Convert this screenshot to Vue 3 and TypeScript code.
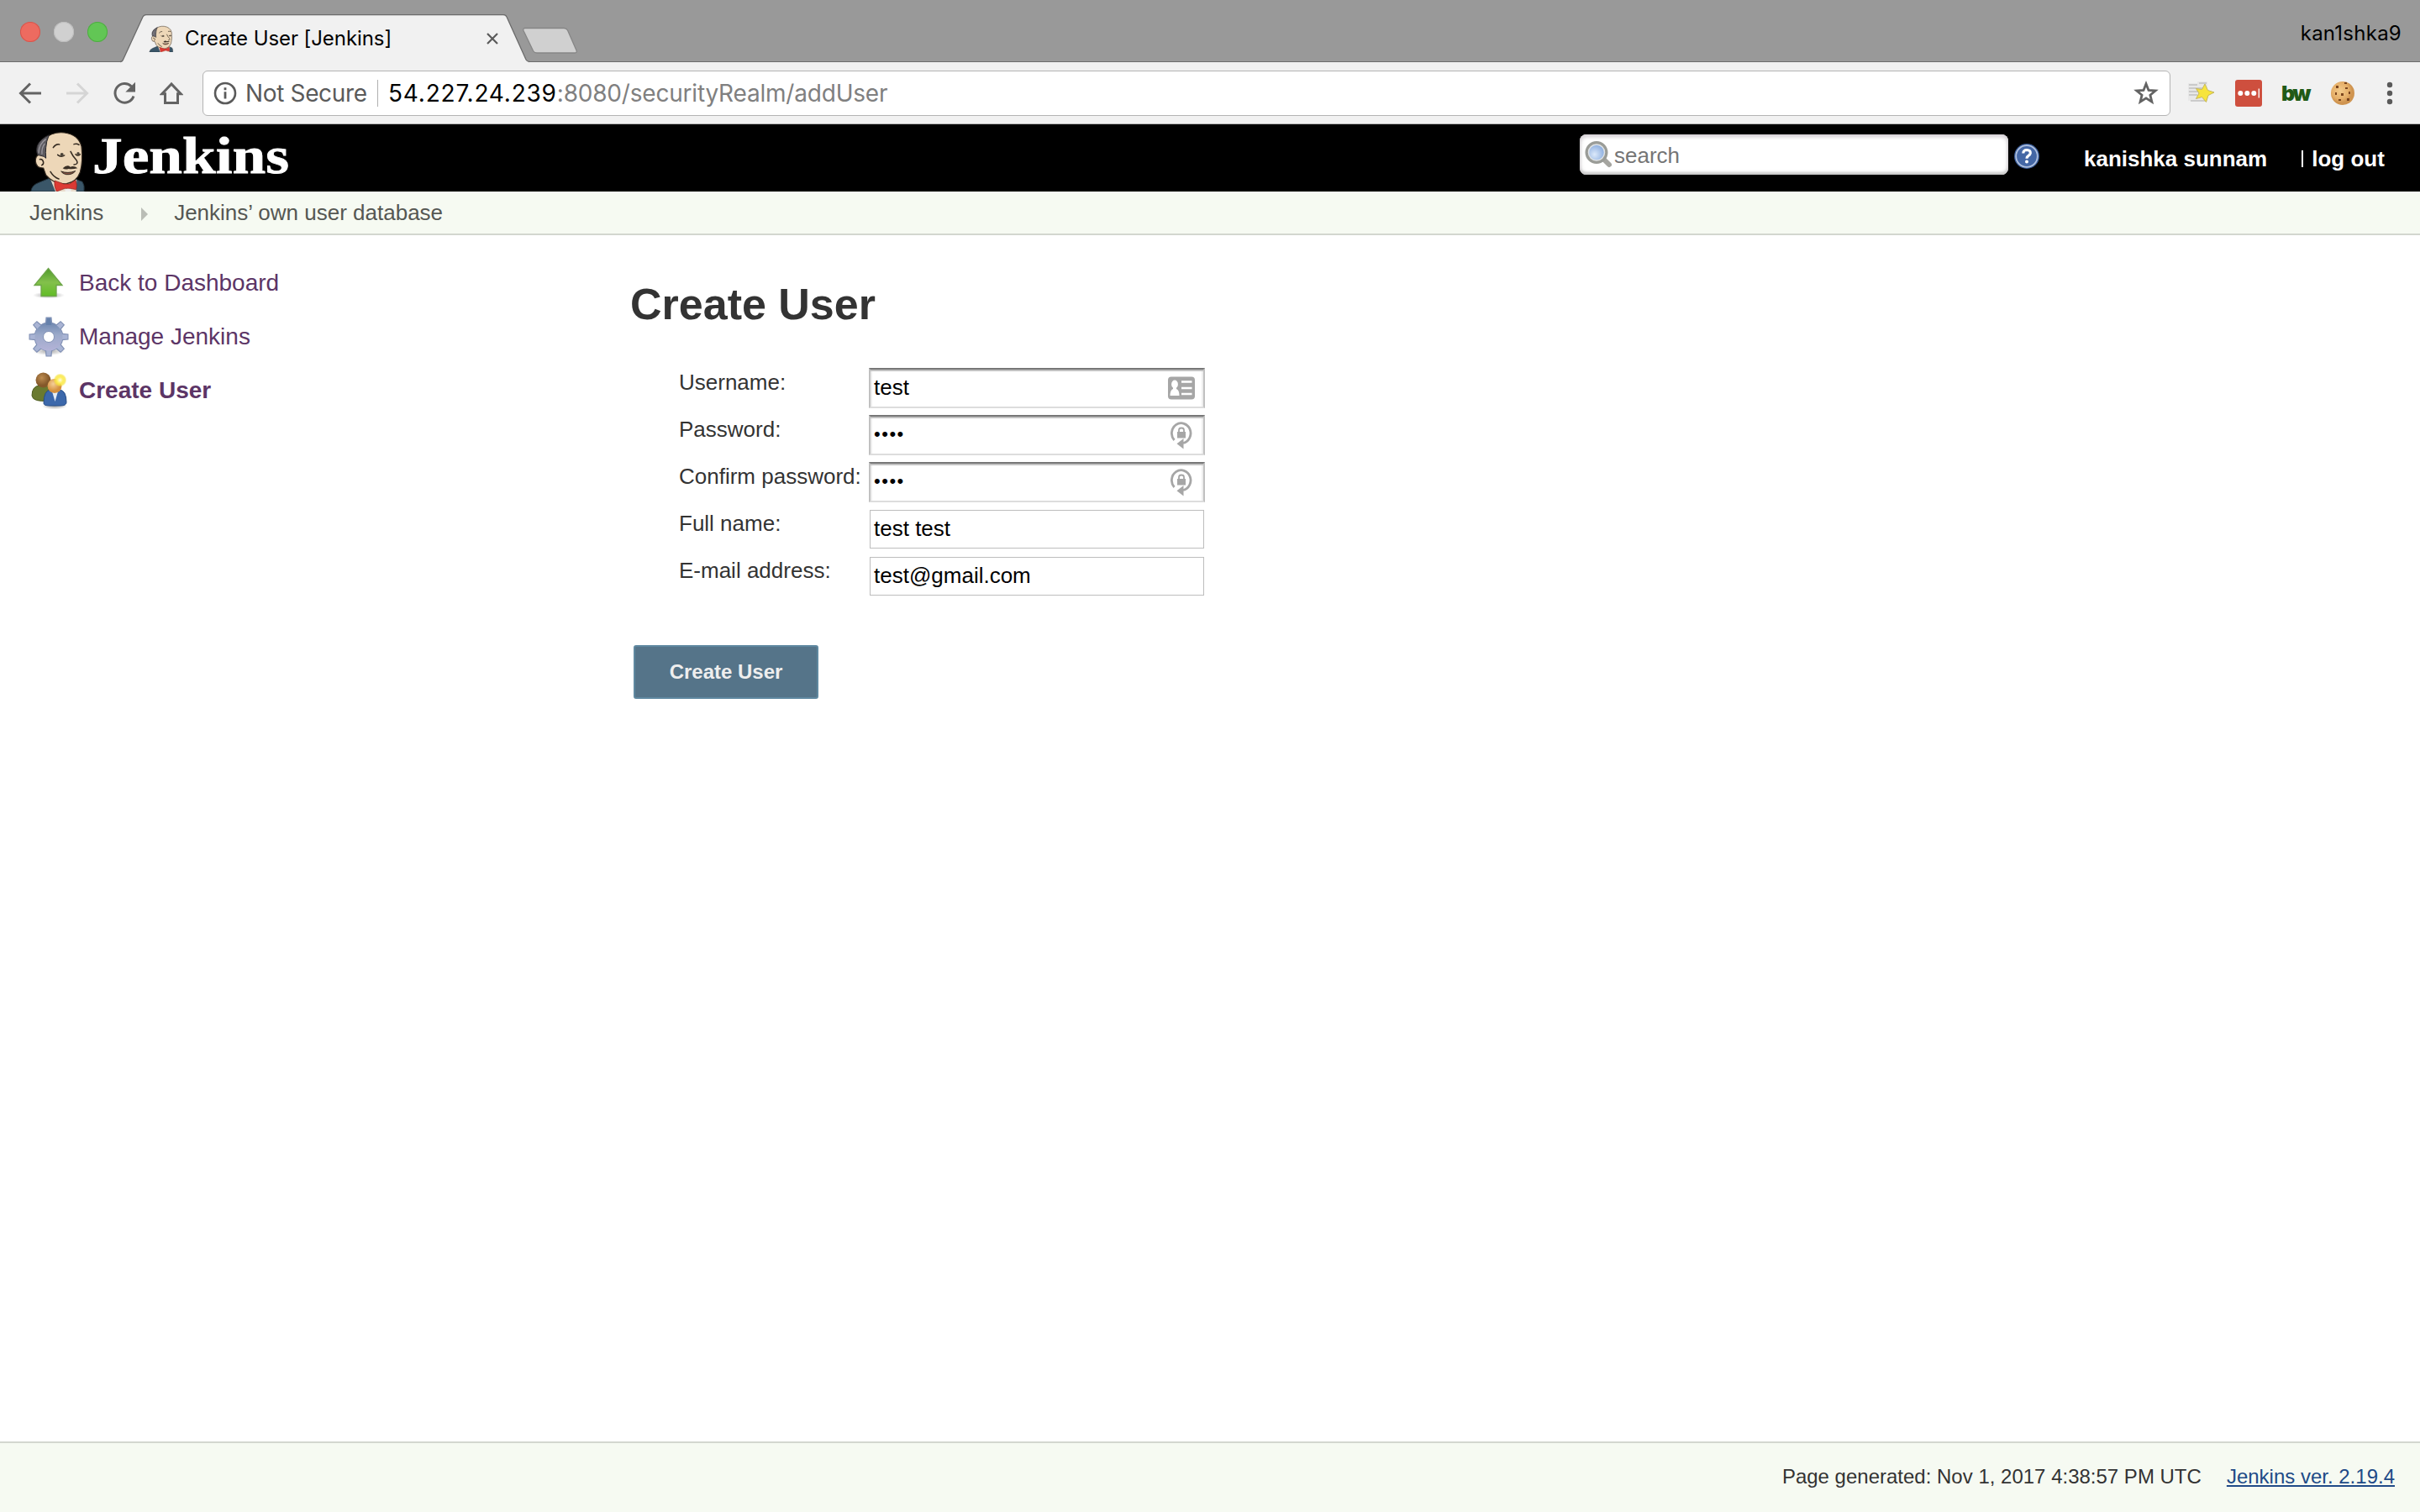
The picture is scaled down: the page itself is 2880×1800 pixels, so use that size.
<script setup lang="ts">
interface Field {
  label: string
  value: string
  kind: 'card' | 'lock' | 'plain'
}

const fields: Field[] = [
  { label: 'Username:', value: 'test', kind: 'card' },
  { label: 'Password:', value: '••••', kind: 'lock' },
  { label: 'Confirm password:', value: '••••', kind: 'lock' },
  { label: 'Full name:', value: 'test test', kind: 'plain' },
  { label: 'E-mail address:', value: 'test@gmail.com', kind: 'plain' },
]

const teeth: number[] = [0, 45, 90, 135, 180, 225, 270, 315]
</script>

<template>
  <div class="window">
    <svg class="defs" width="0" height="0">
      <defs>
        <symbol id="butler" viewBox="50 30 198 219">
          <path d="M52 249 Q56 226 78 218 L122 200 L215 206 L236 214 Q245 226 242 249Z" fill="#3a5668" stroke="#20303a" stroke-width="3" />
          <path d="M122 205 L140 249 L214 249 L216 206Z" fill="#e9dccb" />
          <path d="M98 64 Q128 34 172 39 Q222 46 233 88 Q239 140 228 180 Q216 214 180 221 Q134 224 106 190 L97 165 Q72 166 69 142 Q68 124 80 118 Q68 92 98 64Z" fill="#edd7b8" stroke="#33291f" stroke-width="3.5" />
          <path d="M117 47 Q84 62 75 86 Q70 104 76 118 L99 124 L106 130 Q104 108 106 92 Q107 70 117 47Z" fill="#5d5b60" stroke="#29272b" stroke-width="3" />
          <path d="M80 112 Q80 80 106 62 M92 116 Q90 92 102 78" fill="none" stroke="#98959c" stroke-width="4" />
          <path d="M132 92 Q142 78 154 81 M206 80 Q216 76 224 82 M148 118 Q160 128 172 120 M212 116 Q220 124 228 116 M194 106 Q202 124 215 137 Q224 152 206 153 M84 134 Q94 132 97 144 Q98 152 91 155 M122 178 Q134 198 152 204" fill="none" stroke="#33291f" stroke-width="4.5" stroke-linecap="round" />
          <circle cx="163" cy="117" r="6" fill="#4a4238" />
          <circle cx="221" cy="113" r="5" fill="#4a4238" />
          <path d="M166 166 Q182 150 193 161 Q207 156 219 166 Q200 170 187 168 Q174 172 166 166Z" fill="#3b3026" />
          <path d="M160 177 Q184 186 211 176 Q200 190 178 188 Q166 186 160 177Z" fill="#8b5445" stroke="#33291f" stroke-width="3" />
          <path d="M137 210 L170 222 L190 222 L212 208 Q219 226 214 242 L192 238 L174 238 L144 249 Q134 232 137 210Z" fill="#dc3a34" stroke="#8a211d" stroke-width="2" />
          <ellipse cx="185" cy="245" rx="11" ry="6" fill="#eee" />
        </symbol>
        <linearGradient id="green" x1="0" y1="0" x2="0" y2="1">
          <stop offset="0" stop-color="#4f9a2b" />
          <stop offset=".5" stop-color="#83c04c" />
          <stop offset="1" stop-color="#61bd25" />
        </linearGradient>
        <linearGradient id="steel" gradientUnits="userSpaceOnUse" x1="24" y1="4" x2="24" y2="44">
          <stop offset="0" stop-color="#6681ab" />
          <stop offset=".45" stop-color="#9caaca" />
          <stop offset="1" stop-color="#b8b5da" />
        </linearGradient>
        <radialGradient id="shade">
          <stop offset="0" stop-color="#000" stop-opacity=".35" />
          <stop offset="1" stop-color="#000" stop-opacity="0" />
        </radialGradient>
        <radialGradient id="brown" cx=".4" cy=".35"><stop offset="0" stop-color="#bd8c50" /><stop offset="1" stop-color="#84582a" /></radialGradient>
        <radialGradient id="skin" cx=".4" cy=".35"><stop offset="0" stop-color="#f5cf98" /><stop offset="1" stop-color="#d5913f" /></radialGradient>
        <radialGradient id="glow"><stop offset="0" stop-color="#fffbe0" /><stop offset=".45" stop-color="#fdee5d" /><stop offset=".75" stop-color="#f8e43c" stop-opacity=".75" /><stop offset="1" stop-color="#f8e43c" stop-opacity="0" /></radialGradient>
        <radialGradient id="biscuit" cx=".4" cy=".4"><stop offset="0" stop-color="#f3cb8c" /><stop offset=".7" stop-color="#e6b06a" /><stop offset="1" stop-color="#cf9450" /></radialGradient>
        <radialGradient id="lens" cx=".4" cy=".6"><stop offset="0" stop-color="#dce9fa" /><stop offset="1" stop-color="#8fb0e0" /></radialGradient>
      </defs>
    </svg>

    <header class="titlebar">
      <div class="lights"><i class="red"></i><i class="grey"></i><i class="green"></i></div>
      <div class="tab">
        <svg class="tab-shape" width="490" height="58" viewBox="0 0 490 58">
          <path d="M0 56.5 Q2.5 56.5 3.5 54 L27 3 Q28.5 .5 31 .5 H456 Q459 .5 460 3 L483 54 Q484.5 56.5 487 56.5 V58 H0Z" fill="#f1f1f1" />
          <path d="M0 56.5 Q2.5 56.5 3.5 54 L27 3 Q28.5 .5 31 .5 H456 Q459 .5 460 3 L483 54 Q484.5 56.5 487 56.5" fill="none" stroke="#6b6b6b" stroke-width="1.3" />
        </svg>
        <svg class="favicon" width="32" height="32"><use href="#butler" /></svg>
        <span class="tab-title">Create User [Jenkins]</span>
        <svg class="tab-close" width="14" height="14" viewBox="0 0 14 14"><path d="M1 1 13 13M13 1 1 13" stroke="#5a5a5a" stroke-width="2.2" /></svg>
      </div>
      <svg class="new-tab" width="66" height="34" viewBox="0 0 66 34">
        <path d="M4 1.5 H50 Q53 1.5 54.5 4 L65 28 Q66 31 63 31 H18 Q15 31 13.5 28.5 L2 4.5 Q1 1.5 4 1.5Z" fill="#d0d0d0" stroke="#868686" stroke-width="1.3" />
      </svg>
      <span class="profile">kan1shka9</span>
    </header>

    <nav class="toolbar">
      <svg class="nav-icon" width="28" height="28" viewBox="0 0 28 28"><path d="M27 14H3M14 2.5 2.5 14 14 25.5" fill="none" stroke="#636363" stroke-width="3" /></svg>
      <svg class="nav-icon" width="28" height="28" viewBox="0 0 28 28"><path d="M1 14H25M14 2.5 25.5 14 14 25.5" fill="none" stroke="#d5d5d5" stroke-width="3" /></svg>
      <svg class="nav-icon" width="28" height="28" viewBox="0 0 28 28"><path d="M22.5 6A11.3 11.3 0 1 0 25 17.5" fill="none" stroke="#636363" stroke-width="3" /><path d="M27 .8V12.5H15.3Z" fill="#636363" /></svg>
      <svg class="nav-icon" width="28" height="28" viewBox="0 0 28 28"><path d="M14 3 2.8 14.8H6.5V25.5H21.5V14.8H25.2Z" fill="none" stroke="#636363" stroke-width="3" /></svg>
      <div class="omnibox">
        <svg width="28" height="28" viewBox="0 0 28 28"><circle cx="14" cy="14" r="12" fill="none" stroke="#5a5a5a" stroke-width="2.6" /><path d="M14 12.3V20.5M14 7.3V10.2" stroke="#5a5a5a" stroke-width="2.8" /></svg>
        <span class="insecure">Not Secure</span>
        <i class="divider"></i>
        <span class="url"><b>54.227.24.239</b><span class="path">:8080/securityRealm/addUser</span></span>
        <svg class="bookmark" width="30" height="30" viewBox="0 0 30 30"><path d="M15 3.8 18 11.4 26.2 12 19.9 17.2 21.9 25.2 15 20.8 8.1 25.2 10.1 17.2 3.8 12 12 11.4Z" fill="none" stroke="#636363" stroke-width="2.8" /></svg>
      </div>
      <div class="extensions">
        <svg width="34" height="30" viewBox="0 0 34 30">
          <path d="M1 3 H12 V1 H24 V24 H1Z" fill="#e8e8e8" /><path d="M2 5H12M14 3H23M2 9H22M2 13H16M2 17H12M4 24H22" stroke="#c0c0c0" stroke-width="1.4" />
          <path d="M21 4 24.5 11.5 32 14 25 17.5 22.5 25.5 17.5 19.5 10.5 21.5 14 15 10.5 9.5 17.5 10.5Z" fill="#f7e43d" stroke="#c5b75c" stroke-width="1" />
        </svg>
        <svg width="32" height="32" viewBox="0 0 32 32"><rect width="32" height="32" rx="3" fill="#ce4f3e" /><circle cx="6.3" cy="16" r="3" fill="#fff" /><circle cx="14.3" cy="16" r="3" fill="#fff" /><circle cx="22.3" cy="16" r="3" fill="#fff" /><path d="M28.3 10.5V21.5" stroke="#fff" stroke-width="1.3" /></svg>
        <span class="bw">bw</span>
        <svg width="30" height="30" viewBox="0 0 30 30"><circle cx="15" cy="15" r="14" fill="url(#biscuit)" /><path d="M7 6h3v3H7zM18 8h3v2h-3zM6 14h2v3H6zM13 15h3v3h-3zM22 13h2v3h-2zM10 22h3v2h-3zM20 21h3v3h-3zM17 2h3v2h-3z" fill="#7b461f" /></svg>
        <svg width="8" height="28" viewBox="0 0 8 28"><circle cx="4" cy="4" r="3.2" fill="#5a5a5a" /><circle cx="4" cy="14" r="3.2" fill="#5a5a5a" /><circle cx="4" cy="24" r="3.2" fill="#5a5a5a" /></svg>
      </div>
    </nav>

    <header class="masthead">
      <svg class="butler" width="66" height="73"><use href="#butler" /></svg>
      <div class="brand"><span>Jenkins</span></div>
      <div class="search">
        <svg width="34" height="34" viewBox="0 0 34 34"><path d="M23 23 29 29" stroke="#a5a5a0" stroke-width="6" stroke-linecap="round" /><circle cx="14" cy="14.5" r="11.5" fill="url(#lens)" stroke="#9a9c97" stroke-width="4" /><circle cx="14" cy="14.5" r="9.5" fill="none" stroke="#dfe3e6" stroke-width="1.5" /></svg>
        <span>search</span>
      </div>
      <svg class="help" width="32" height="32" viewBox="0 0 32 32"><circle cx="16" cy="16" r="15" fill="#3a5c98" /><circle cx="16" cy="16" r="12.8" fill="#4467a5" stroke="#b0c1de" stroke-width="1.8" /><path d="M11.8 12.5Q12 8.5 16.2 8.5 20.500 8.7 20.3 12.2 20 14.5 17.5 15.8 16 16.8 16 18.7" fill="none" stroke="#fff" stroke-width="3.2" /><circle cx="16" cy="22.6" r="2" fill="#fff" /></svg>
      <span class="account">kanishka sunnam</span>
      <i class="bar"></i>
      <span class="logout">log out</span>
    </header>

    <div class="breadcrumbs">
      <span>Jenkins</span>
      <svg width="8" height="16" viewBox="0 0 8 16"><path d="M0 0 8 8 0 16Z" fill="#babdb6" /></svg>
      <span>Jenkins’ own user database</span>
    </div>

    <main class="body">
      <aside class="tasks">
        <a class="task">
          <svg width="48" height="48" viewBox="0 0 48 48"><ellipse cx="24" cy="39.5" rx="19" ry="4" fill="url(#shade)" /><path d="M23.5 7.5 40 27.5H33V40.5H15V27.5H7Z" fill="url(#green)" stroke="#6ea54a" stroke-width="1.3" /></svg>
          <span>Back to Dashboard</span>
        </a>
        <a class="task">
          <svg class="gear" width="48" height="48" viewBox="0 0 48 48">
            <ellipse cx="24" cy="41" rx="19" ry="5" fill="url(#shade)" />
            <g fill="#8090b4"><path v-for="a in teeth" :key="a" d="M19.5 11 20.5 .5H27.5L28.5 11Z" :transform="`rotate(${a} 24 24)`" /></g>
            <circle cx="24" cy="24" r="12" fill="none" stroke="#8090b4" stroke-width="11" />
            <g fill="#a9b4d4"><path v-for="a in teeth" :key="a" d="M20.8 12 21.6 1.5H26.4L27.2 12Z" :transform="`rotate(${a} 24 24)`" /></g>
            <circle cx="24" cy="24" r="11.5" fill="none" stroke="url(#steel)" stroke-width="10" />
            <path d="M21.6 1.5H26.4L27.2 10H20.8Z" fill="#6681ab" />
            <circle cx="24" cy="24" r="6.5" fill="#fff" stroke="#8090b4" stroke-width="1" />
          </svg>
          <span>Manage Jenkins</span>
        </a>
        <a class="task current">
          <svg width="48" height="48" viewBox="0 0 48 48">
            <ellipse cx="31" cy="43.5" rx="15" ry="4" fill="url(#shade)" />
            <path d="M4 31Q4 19 14 19H22Q25 22 24 37Q5 39 4 31Z" fill="#6a7a30" stroke="#4e5c20" />
            <circle cx="17.5" cy="12.5" r="9" fill="url(#brown)" />
            <path d="M18 40Q18 25 26 24H37Q45 25 45 39Q45 43 38 43H25Q18 43 18 40Z" fill="#3c68ab" stroke="#274e87" />
            <path d="M28 26 31.5 38 35 26Z" fill="#e6edf5" />
            <circle cx="31" cy="19.5" r="8.5" fill="url(#skin)" />
            <circle cx="37.5" cy="12.5" r="8" fill="url(#glow)" />
          </svg>
          <span>Create User</span>
        </a>
      </aside>

      <section class="panel">
        <h1>Create User</h1>
        <div v-for="f in fields" :key="f.label" class="row">
          <label>{{ f.label }}</label>
          <div class="field" :class="{ plain: f.kind === 'plain' }">
            <span :class="{ dots: f.kind === 'lock' }">{{ f.value }}</span>
            <svg v-if="f.kind === 'card'" class="hint" width="32" height="28" viewBox="0 0 32 28">
              <rect y=".5" width="32" height="27" rx="4" fill="#a6a6a6" />
              <path d="M16 6.5H28.5M16 14H28.5M16 21H28.5" stroke="#fff" stroke-width="2.6" />
              <ellipse cx="8" cy="9.5" rx="3.9" ry="5" fill="#fff" /><path d="M6 12H10V15Q13.5 16.5 13.5 23H2.5Q2.5 16.5 6 15Z" fill="#fff" />
            </svg>
            <svg v-else-if="f.kind === 'lock'" class="hint lock" width="26" height="34" viewBox="0 0 26 34">
              <path d="M4.5 23A11.3 12 0 1 1 15 26.5" fill="none" stroke="#a6a6a6" stroke-width="2.8" />
              <path d="M15.5 21V33.500L7.5 27.3Z" fill="#a6a6a6" />
              <rect x="8" y="13" width="10" height="7.5" fill="#a6a6a6" /><path d="M10 13V11Q10 8.500 13 8.500T16 11V13" fill="none" stroke="#a6a6a6" stroke-width="1.8" />
            </svg>
          </div>
        </div>
        <button type="button">Create User</button>
      </section>
    </main>

    <footer class="footer">
      <span>Page generated: Nov 1, 2017 4:38:57 PM UTC</span>
      <a>Jenkins ver. 2.19.4</a>
    </footer>
  </div>
</template>

<style>
body {
  margin: 0;
  background: #fff;
}
</style>

<style scoped>
.window {
  width: 2880px;
  height: 1800px;
  display: flex;
  flex-direction: column;
  overflow: hidden;
  font-family: "Liberation Sans", Arial, sans-serif;
  font-size: 26px;
  color: #333;
  white-space: nowrap;
}
.window * {
  box-sizing: border-box;
}
svg {
  display: block;
  flex: none;
}
.defs {
  position: absolute;
}

.titlebar {
  height: 74px;
  flex: none;
  display: flex;
  background: #999;
  border-bottom: 1px solid #6b6b6b;
  font-family: Inter, sans-serif;
}
.lights {
  display: flex;
  gap: 16px;
  padding: 26px 0 0 24px;
}
.lights i {
  width: 24px;
  height: 24px;
  border-radius: 50%;
}
.red { background: #ed6b60; box-shadow: inset 0 0 0 1px #d5554c; }
.grey { background: #d0d0d0; box-shadow: inset 0 0 0 1px #bdbdbd; }
.green { background: #62c655; box-shadow: inset 0 0 0 1px #4fab43; }
.tab {
  position: relative;
  display: flex;
  align-items: center;
  width: 486px;
  height: 57px;
  margin: 17px 0 0 15px;
  padding-left: 33px;
}
.tab-shape {
  position: absolute;
  left: 0;
  top: 0;
}
.favicon {
  position: relative;
}
.tab-title {
  position: relative;
  margin-left: 12px;
  width: 359px;
  font-size: 24px;
  letter-spacing: -0.08px;
  color: #000;
}
.tab-close {
  position: relative;
}
.new-tab {
  margin: 32px 0 0 -8px;
}
.profile {
  margin-left: auto;
  padding-right: 22px;
  font-size: 24px;
  line-height: 80px;
  letter-spacing: 0.25px;
  color: #000;
}

.toolbar {
  height: 74px;
  flex: none;
  display: flex;
  align-items: center;
  padding-left: 22px;
  background: #f1f1f1;
  border-bottom: 1px solid #b5b5b5;
  font-family: Inter, sans-serif;
}
.nav-icon {
  margin-right: 28px;
}
.omnibox {
  width: 2342px;
  height: 54px;
  display: flex;
  align-items: center;
  margin-left: -5px;
  padding: 0 13px 0 12px;
  background: #fff;
  border: 1px solid #b3b3b3;
  border-radius: 6px;
  font-size: 28px;
}
.insecure {
  width: 157px;
  margin-left: 10px;
  letter-spacing: -0.35px;
  color: #5a5a5a;
}
.divider {
  width: 1px;
  height: 32px;
  margin-right: 12px;
  background: #b0b0b0;
}
.url b {
  font-weight: 400;
  letter-spacing: 0.8px;
  color: #000;
}
.path {
  letter-spacing: -0.2px;
  color: #808080;
}
.bookmark {
  margin-left: auto;
}
.extensions {
  display: flex;
  align-items: center;
  margin-left: 20px;
}
.extensions > :nth-child(2) { margin-left: 23px; }
.extensions > :nth-child(4) { margin-left: 26px; }
.extensions > :nth-child(5) { margin-left: 37px; }
.bw {
  width: 32px;
  margin-left: 23px;
  font: 900 25px/30px Inter, sans-serif;
  letter-spacing: -2.5px;
  color: #205a16;
}

.masthead {
  height: 80px;
  flex: none;
  display: flex;
  align-items: center;
  padding-left: 36px;
  background: #000;
  color: #fff;
  font-weight: 700;
}
.butler {
  align-self: flex-end;
}
.brand {
  width: 1770px;
  margin: 0 0 5px 8px;
  font: 700 61px/70px "Liberation Serif", serif;
  -webkit-text-stroke: 0.8px #fff;
}
.brand span {
  display: inline-block;
  transform: scaleX(1.17);
  transform-origin: left;
}
.search {
  width: 510px;
  height: 48px;
  display: flex;
  align-items: center;
  margin-bottom: 8px;
  padding-left: 6px;
  border-radius: 8px;
  background: #fff;
  box-shadow: inset 0 3px 4px #d6d0d6, inset 0 -3px 3px #c9c9c9, inset 0 0 6px #ddd;
  color: #757575;
  font-weight: 400;
}
.search span {
  margin-left: 1px;
  padding-top: 2px;
}
.help {
  margin: -4px 0 0 6px;
}
.account {
  margin-left: 52px;
  padding-top: 3px;
}
.bar {
  width: 2px;
  height: 20px;
  margin: 1px 10px 0 41px;
  background: #fff;
}
.logout {
  padding-top: 3px;
}

.breadcrumbs {
  height: 52px;
  flex: none;
  display: flex;
  align-items: center;
  padding-left: 35px;
  background: #f6faf2;
  border-bottom: 2px solid #d3d7cf;
  color: #555753;
}
.breadcrumbs span {
  line-height: 50px;
}
.breadcrumbs svg {
  margin: 3px 31px 0 45px;
}

.body {
  flex: 1;
  display: flex;
}
.tasks {
  width: 750px;
  flex: none;
  padding: 24px 0 0 34px;
}
.task {
  height: 64px;
  display: flex;
  align-items: center;
  gap: 12px;
  font-size: 28px;
  color: #5c3566;
}
.task span {
  padding-top: 2px;
}
.task .gear {
  margin-top: 2px;
}
.task.current {
  font-weight: 700;
}
.panel {
  padding-top: 52px;
}
h1 {
  margin: 0 0 46px;
  font-size: 52px;
  line-height: 60px;
}
.row {
  height: 56px;
  display: flex;
  padding-left: 58px;
}
label {
  width: 226px;
  line-height: 34px;
}
.field {
  width: 400px;
  height: 48px;
  display: flex;
  align-items: center;
  padding: 0 10px 2px 4px;
  border: 2px solid #c0c0c0;
  border-top-color: #777;
  border-bottom-color: #ddd;
  box-shadow: inset 0 2px #c2c2c2, inset 2px 0 #eee, inset -2px 0 #eee;
  color: #000;
}
.field.plain {
  width: 398px;
  height: 46px;
  margin: 1px;
  border: 1px solid #bdbdbd;
  box-shadow: none;
}
.dots {
  font-size: 22px;
  letter-spacing: 1.5px;
}
.hint {
  margin: 2px 0 0 auto;
}
.hint.lock {
  margin: 1px 3px 0 auto;
}
button {
  display: block;
  width: 220px;
  height: 64px;
  margin: 50px 0 0 4px;
  padding: 0;
  border: 2px solid #5f88a0;
  border-radius: 3px;
  background: #557489;
  color: #eee;
  font: 700 24px/60px "Liberation Sans", Arial, sans-serif;
}

.footer {
  height: 84px;
  flex: none;
  display: flex;
  justify-content: flex-end;
  gap: 30px;
  padding: 0 30px 0 0;
  background: #f6faf2;
  border-top: 2px solid #d3d7cf;
  font-size: 24px;
  line-height: 80px;
}
.footer a {
  color: #204a87;
  text-decoration: underline;
  text-decoration-thickness: 2px;
  text-underline-offset: 2px;
}
</style>
